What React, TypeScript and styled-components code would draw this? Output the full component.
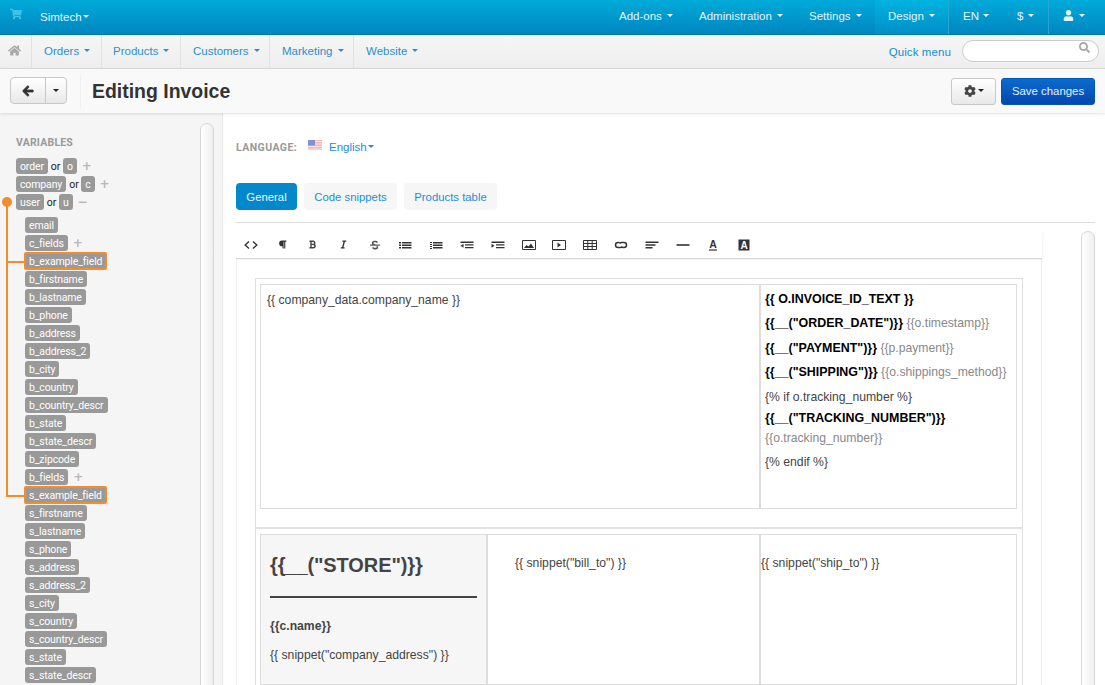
import React from "react";
import styled, { createGlobalStyle } from "styled-components";
import { FaShoppingCart, FaHome, FaArrowLeft, FaCog, FaUser, FaSearch, FaParagraph, FaBold, FaItalic, FaStrikethrough } from "react-icons/fa";

const Global = createGlobalStyle`
  html, body { margin: 0; padding: 0; background: #fff; }
  body { font-family: "Liberation Sans", Arial, sans-serif; font-size: 12px; color: #444; }
  * { box-sizing: border-box; }
`;

const Page = styled.div`
  width: 1105px; height: 685px; overflow: hidden; display: flex; flex-direction: column;
`;
const TopBar = styled.header`
  height: 35px; flex: none; display: flex; align-items: stretch; justify-content: space-between; color: #e6f5fb;
  background: linear-gradient(to bottom, #00abd9, #0086c0); border-bottom: 1px solid #0079ad;
`;
const TopLeft = styled.div`
  display: flex; align-items: center; padding-left: 10px;
  svg { color: #3fc0e6; font-size: 12px; margin-top: -7px; }
`;
const Brand = styled.span`
  margin-left: 18px; font-size: 11.5px; display: flex; align-items: center; color: #e3f3fa;
`;
const Caret = styled.i<{ $c?: string; $gap?: number }>`
  display: inline-block; width: 0; height: 0; margin-left: ${p => p.$gap ?? 5}px; margin-top: -1px;
  border-left: 3px solid transparent; border-right: 3px solid transparent;
  border-top: 3px solid ${p => p.$c ?? "#f0f9fc"};
`;
const TopRight = styled.nav`
  display: flex; align-items: stretch; margin-right: 8px;
`;
const TopItem = styled.a<{ $on?: boolean; $w: number; $sep?: boolean; $pl: number }>`
  width: ${p => p.$w}px; padding-left: ${p => p.$pl}px; display: flex; align-items: center; font-size: 11.5px; color: #e3f3fa;
  padding-bottom: 3px;
  background: ${p => (p.$on ? "linear-gradient(to bottom, #00b3e0, #008fc8)" : "none")};
  border-right: ${p => (p.$sep ? "1px solid #29a5d5" : "0")};
`;
const SubBar = styled.div`
  height: 34px; flex: none; display: flex; align-items: stretch; justify-content: space-between;
  background: linear-gradient(to bottom, #f6f6f6, #eeeeee); border-bottom: 1px solid #dadada;
`;
const SubNav = styled.nav`display: flex; align-items: stretch;`;
const HomeCell = styled.a`
  width: 32px; display: flex; align-items: center; padding-left: 8px; color: #a8a8a8; font-size: 13px; border-right: 1px solid #e2e2e2;
  padding-bottom: 3px;
`;
const SubItem = styled.a<{ $w: number; $pl?: number; $last?: boolean }>`
  width: ${p => p.$w}px; display: flex; align-items: center; padding: 0 0 2px ${p => p.$pl ?? 12}px; font-size: 11.5px; color: #2a8fd0;
  border-right: ${p => (p.$last ? "0" : "1px solid #e2e2e2")};
`;
const QuickArea = styled.div`display: flex; align-items: center; padding-right: 6px; padding-bottom: 1px;`;
const Quick = styled.a`font-size: 11.5px; color: #0c8fd8; margin-right: 11px; letter-spacing: .1px; padding-top: 1px;`;
const SearchBox = styled.div`
  width: 137px; height: 22px; background: #fff; border: 1px solid #ccc; border-radius: 11px; display: flex; justify-content: flex-end; padding: 1px 8px 0 0;
  color: #a5a5a5; font-size: 11px;
`;
const ActionBar = styled.div`
  height: 44px; flex: none; display: flex; align-items: center; justify-content: space-between; padding: 0 10px;
  background: #f9f9f9; box-shadow: 0 1px 3px rgba(0,0,0,.12); position: relative; z-index: 2;
`;
const ActionLeft = styled.div`display: flex; align-items: center;`;
const BtnGroup = styled.div`
  width: 57px; height: 27px; display: flex; margin-top: -1px; border: 1px solid #c8c8c8; border-radius: 4px;
  background: linear-gradient(to bottom, #fff, #e8e8e8); color: #333;
`;
const BackBtn = styled.span`
  width: 35px; display: flex; align-items: center; justify-content: center; border-right: 1px solid #c8c8c8; font-size: 12px;
  svg { stroke: currentColor; stroke-width: 40; }
`;
const DropBtn = styled.span`flex: 1; display: flex; align-items: center; justify-content: center;`;
const VSep = styled.div`width: 1px; height: 33px; background: #f0f0f0; margin: 0 11px 0 13px;`;
const Title = styled.h1`margin: 0; font-size: 19.45px; line-height: 24px; font-weight: 700; color: #333;`;
const ActionRight = styled.div`display: flex; gap: 5px;`;
const GearBtn = styled.span`
  width: 45px; height: 27px; display: flex; align-items: center; justify-content: center; border: 1px solid #c8c8c8; border-radius: 3px;
  background: linear-gradient(to bottom, #fff, #e8e8e8); color: #444; font-size: 12px;
`;
const SaveBtn = styled.span`
  width: 94px; height: 27px; display: flex; align-items: center; justify-content: center; border-radius: 3px; color: #e8f0fa; font-size: 11.4px;
  background: linear-gradient(to bottom, #0a6ccf, #0346ae); border: 1px solid #0555b5;
`;
const Body = styled.div`flex: 1; min-height: 0; display: flex;`;
const Sidebar = styled.aside`
  width: 223px; flex: none; background: #f5f5f5; border-right: 1px solid #e8e8e8; position: relative; padding: 23px 0 0 16px; overflow: hidden;
`;
const SideScroll = styled.div`
  position: absolute; left: 200px; top: 10px; bottom: -10px; width: 14px; border: 1px solid #d6d6d6; border-radius: 7px 7px 0 0;
  background: linear-gradient(to right, #fff, #efefef);
`;
const SideTitle = styled.div`
  font-family: Roboto, sans-serif; font-weight: 700; font-size: 10.5px; color: #9a9a9a; line-height: 13px; letter-spacing: .2px; margin-bottom: 8px;
`;
const VarRow = styled.div<{ $nested?: boolean }>`
  height: 18px; display: flex; align-items: center; font-size: 11.5px; color: #222; margin-left: ${p => (p.$nested ? 9 : 0)}px;
`;
const Tag = styled.span`
  height: 16px; display: inline-flex; align-items: center; padding: 0 4px; border-radius: 3px; background: #999; color: #fff;
  font-family: Roboto, sans-serif; font-size: 10.5px; letter-spacing: -.13px;
`;
const HiTag = styled(Tag)`
  height: 18px; margin-left: -1px; border: 2px solid #f68b2c; border-radius: 2px; padding: 0 3px;
`;
const Or = styled.span`margin: 0 2.5px 0 3px; font-family: Roboto, sans-serif; font-size: 10.5px; color: #222;`;
const Sign = styled.span`margin-left: 5px; color: #b8b8b8; font-family: "DejaVu Sans", sans-serif; font-size: 12px; font-weight: 700; line-height: 14px;`;
const Nested = styled.div`margin-top: 5px;`;
const Dot = styled.span`position: absolute; left: 2px; top: 84px; width: 10px; height: 10px; border-radius: 50%; background: #f68b2c;`;
const Trunk = styled.span`position: absolute; left: 6px; top: 85px; width: 2px; height: 299px; background: #f68b2c;`;
const Branch = styled.span<{ $top: number }>`position: absolute; left: 6px; top: ${p => p.$top}px; width: 19px; height: 2px; background: #f68b2c;`;
const Main = styled.main`flex: 1; min-width: 0; padding: 22px 10px 0 13px; position: relative; overflow: hidden;`;
const MainScroll = styled.div`
  position: absolute; left: 858px; top: 118px; bottom: -10px; width: 14px; border: 1px solid #d6d6d6; border-radius: 7px 7px 0 0;
  background: linear-gradient(to right, #fff, #efefef);
`;
const LangRow = styled.div`display: flex; align-items: center; height: 24px;`;
const LangLabel = styled.span`
  font-family: Roboto, sans-serif; font-weight: 700; font-size: 10.5px; letter-spacing: .45px; color: #999; width: 72px;
`;
const Flag = styled.svg`width: 14px; height: 10px; margin-top: -4px; margin-right: 7px;`;
const LangLink = styled.a`font-size: 11.5px; color: #1c8ed6; display: flex; align-items: center;`;
const Tabs = styled.div`display: flex; gap: 7px; margin-top: 24px; padding-bottom: 12px; border-bottom: 1px solid #ddd;`;
const TabBtn = styled.span<{ $on?: boolean; $w: number }>`
  width: ${p => p.$w}px; height: 27px; display: flex; align-items: center; justify-content: center; border-radius: 4px; font-size: 11.35px;
  background: ${p => (p.$on ? "#0388cc" : "#f6f6f6")}; color: ${p => (p.$on ? "#eef7fc" : "#1c8ed6")};
`;
const Toolbar = styled.div`
  width: 806px; height: 27px; margin-top: 9px; display: flex; align-items: center; background: #fff; padding-bottom: 1px;
  border-bottom: 1px solid #d6d6d6; box-shadow: 1px 1px 2px rgba(0,0,0,.06); position: relative;
`;
const ToolIcon = styled.span`
  width: 30.8px; height: 14px; flex: none; display: flex; justify-content: center; align-items: center; color: #333; font-size: 10px;
  svg { display: block; }
`;
const Editor = styled.div`
  width: 806px; border-left: 1px solid #eee; border-right: 1px solid #eee; padding: 19px 18px 0 18px;
`;
const OuterTable = styled.div`border: 1px solid #e0e0e0; padding: 5px 5px 0 4px; width: 768px;`;
const Row = styled.div<{ $h: number }>`display: flex; height: ${p => p.$h}px;`;
const Cell = styled.div<{ $w: number; $grey?: boolean; $pl?: number; $pt?: number }>`
  width: ${p => p.$w}px; flex: none; border: 1px solid #ddd;
  background: ${p => (p.$grey ? "#f6f6f6" : "#fff")}; padding: ${p => p.$pt ?? 8}px 0 0 ${p => p.$pl ?? 6}px;
`;
const RowSep = styled.div`height: 2px; background: #e2e2e2; margin: 18px -5px 5px -4px;`;
const Tmpl = styled.div`font-size: 12.2px; line-height: 14px; color: #444; white-space: nowrap;`;
const Line = styled.div<{ $h: number }>`height: ${p => p.$h}px; font-size: 12.2px; line-height: 14px; white-space: nowrap; color: #444;`;
const Strong = styled.b`color: #000; font-weight: 700; font-size: 12.45px;`;
const Mute = styled.span`color: #888;`;
const Store = styled.div`font-size: 20px; line-height: 26px; font-weight: 700; color: #444; margin-top: 8px; letter-spacing: -.1px;`;
const Rule = styled.div`width: 207px; height: 2px; background: #444; margin-top: 18px;`;
const CName = styled.div`font-weight: 700; font-size: 12.2px; line-height: 14px; color: #444; margin-top: 21px;`;
const Addr = styled(Tmpl)`margin-top: 15px;`;

const S = (p: { w?: number; h?: number; children: React.ReactNode }) => (
  <svg width={p.w ?? 14} height={p.h ?? 12} viewBox={`0 0 ${p.w ?? 14} ${p.h ?? 12}`} fill="#333">{p.children}</svg>
);

const tools: React.ReactNode[] = [
  <S><path d="M5 2.5 1.2 6 5 9.5M9 2.5 12.8 6 9 9.5" fill="none" stroke="#333" strokeWidth="1.4" /></S>,
  <FaParagraph size={9} />,
  <FaBold size={9} style={{ color: "#444" }} />,
  <FaItalic size={9} />,
  <FaStrikethrough size={10} style={{ color: "#555" }} />,
  <S><path d="M1 3h2v1.5H1zM1 5.5h2v1.5H1zM1 8h2v1.5H1zM4 3h9.5v1.5H4zM4 5.5h9.5v1.5H4zM4 8h9.5v1.5H4z" /></S>,
  <S><path d="M1 3h2v1H1zM1 5h2v1H1zM1 7h2v1H1zM1 9h2v1H1zM4 3h9.5v1.5H4zM4 5.5h9.5v1.5H4zM4 8h9.5v1.5H4z" /></S>,
  <S><path d="M.5 2.5h13v1.4H.5zM5 5.2h8.5v1.4H5zM5 7.9h8.5v1.4H5zM.5 6.8l3-2v4z" /></S>,
  <S><path d="M.5 2.5h13v1.4H.5zM5 5.2h8.5v1.4H5zM5 7.9h8.5v1.4H5zM3.5 6.8l-3-2v4z" /></S>,
  <S><path d="M.5 1.5h13v9H.5z" fill="#fff" stroke="#333" /><path d="M2 9l2.5-3 2 1.5L9 4.5 12 9z" /></S>,
  <S><path d="M.5 1.5h13v9H.5z" fill="#fff" stroke="#333" /><path d="M5.5 3.5 9 6l-3.5 2.5z" /></S>,
  <S><path d="M.5 1.5h13v9H.5z" fill="none" stroke="#333" /><path d="M.5 4.5h13M.5 7.5h13M4.8 1.5v9M9.2 1.5v9" stroke="#333" /></S>,
  <S><path d="M5.5 3.5H4a2.5 2.5 0 0 0 0 5h2.5a2.5 2.5 0 0 0 2-1M8.5 8.5H10a2.5 2.5 0 0 0 0-5H7.5a2.5 2.5 0 0 0-2 1" fill="none" stroke="#333" strokeWidth="1.5" /></S>,
  <S><path d="M.5 2.5h13v1.5H.5zM.5 5.3h10v1.5H.5zM.5 8.1h7v1.5H.5z" /></S>,
  <S><path d="M.5 5.2h13v1.6H.5z" /></S>,
  <S w={10}><path d="M1 10.4h8v1.2H1z" /><text x="5" y="9.2" fontSize="10.5" fontWeight="700" textAnchor="middle" fontFamily="Liberation Sans">A</text></S>,
  <S w={12}><path d="M.5 .5h11v11H.5z" /><text x="6" y="9.6" fontSize="10" fontWeight="700" textAnchor="middle" fill="#fff" fontFamily="Liberation Sans">A</text></S>,
];

const nested: { n: string; hi?: boolean; plus?: boolean }[] = [
  { n: "email" }, { n: "c_fields", plus: true }, { n: "b_example_field", hi: true }, { n: "b_firstname" }, { n: "b_lastname" },
  { n: "b_phone" }, { n: "b_address" }, { n: "b_address_2" }, { n: "b_city" }, { n: "b_country" }, { n: "b_country_descr" },
  { n: "b_state" }, { n: "b_state_descr" }, { n: "b_zipcode" }, { n: "b_fields", plus: true }, { n: "s_example_field", hi: true },
  { n: "s_firstname" }, { n: "s_lastname" }, { n: "s_phone" }, { n: "s_address" }, { n: "s_address_2" }, { n: "s_city" },
  { n: "s_country" }, { n: "s_country_descr" }, { n: "s_state" }, { n: "s_state_descr" },
];

export default function App() {
  return (
    <Page>
      <Global />
      <TopBar>
        <TopLeft>
          <FaShoppingCart />
          <Brand>Simtech<Caret $gap={1} /></Brand>
        </TopLeft>
        <TopRight>
          <TopItem $w={80} $pl={13}>Add-ons<Caret /></TopItem>
          <TopItem $w={110} $pl={13}>Administration<Caret /></TopItem>
          <TopItem $w={79} $pl={13}>Settings<Caret /></TopItem>
          <TopItem $w={74} $pl={13} $on $sep>Design<Caret /></TopItem>
          <TopItem $w={53} $pl={14}>EN<Caret $gap={4} /></TopItem>
          <TopItem $w={47} $pl={15} $sep>$<Caret $gap={5} /></TopItem>
          <TopItem $w={48} $pl={14}><FaUser size={11} /><Caret $gap={5} /></TopItem>
        </TopRight>
      </TopBar>
      <SubBar>
        <SubNav>
          <HomeCell><FaHome /></HomeCell>
          <SubItem $w={70}>Orders<Caret $c="#2a8fd0" /></SubItem>
          <SubItem $w={79} $pl={11}>Products<Caret $c="#2a8fd0" /></SubItem>
          <SubItem $w={89}>Customers<Caret $c="#2a8fd0" /></SubItem>
          <SubItem $w={84}>Marketing<Caret $c="#2a8fd0" /></SubItem>
          <SubItem $w={70} $last>Website<Caret $c="#2a8fd0" /></SubItem>
        </SubNav>
        <QuickArea>
          <Quick>Quick menu</Quick>
          <SearchBox><FaSearch /></SearchBox>
        </QuickArea>
      </SubBar>
      <ActionBar>
        <ActionLeft>
          <BtnGroup>
            <BackBtn><FaArrowLeft /></BackBtn>
            <DropBtn><Caret $c="#222" $gap={0} /></DropBtn>
          </BtnGroup>
          <VSep />
          <Title>Editing Invoice</Title>
        </ActionLeft>
        <ActionRight>
          <GearBtn><FaCog /><Caret $c="#222" $gap={2} /></GearBtn>
          <SaveBtn>Save changes</SaveBtn>
        </ActionRight>
      </ActionBar>
      <Body>
        <Sidebar>
          <SideScroll />
          <Dot /><Trunk /><Branch $top={148} /><Branch $top={382} />
          <SideTitle>VARIABLES</SideTitle>
          <VarRow><Tag>order</Tag><Or>or</Or><Tag>o</Tag><Sign>+</Sign></VarRow>
          <VarRow><Tag>company</Tag><Or>or</Or><Tag>c</Tag><Sign>+</Sign></VarRow>
          <VarRow><Tag>user</Tag><Or>or</Or><Tag>u</Tag><Sign>−</Sign></VarRow>
          <Nested>
            {nested.map(t => (
              <VarRow $nested key={t.n}>
                {t.hi ? <HiTag>{t.n}</HiTag> : <Tag>{t.n}</Tag>}
                {t.plus && <Sign>+</Sign>}
              </VarRow>
            ))}
          </Nested>
        </Sidebar>
        <Main>
          <MainScroll />
          <LangRow>
            <LangLabel>LANGUAGE:</LangLabel>
            <Flag viewBox="0 0 14 10">
              <rect width="14" height="10" fill="#f3b5b5" />
              <path d="M0 1.5h14M0 4h14M0 6.5h14M0 9h14" stroke="#fbe7e7" strokeWidth="1" />
              <rect width="7" height="5.5" fill="#7d93d8" />
            </Flag>
            <LangLink>English<Caret $c="#1c8ed6" $gap={1} /></LangLink>
          </LangRow>
          <Tabs>
            <TabBtn $on $w={61}>General</TabBtn>
            <TabBtn $w={93}>Code snippets</TabBtn>
            <TabBtn $w={93}>Products table</TabBtn>
          </Tabs>
          <Toolbar>
            {tools.map((t, i) => <ToolIcon key={i}>{t}</ToolIcon>)}
          </Toolbar>
          <Editor>
            <OuterTable>
              <Row $h={225}>
                <Cell $w={500} $pt={8}><Tmpl>{"{{ company_data.company_name }}"}</Tmpl></Cell>
                <Cell $w={257} $pl={4} $pt={7}>
                  <Line $h={24}><Strong>{"{{ O.INVOICE_ID_TEXT }}"}</Strong></Line>
                  <Line $h={25}><Strong>{'{{__("ORDER_DATE")}}'}</Strong> <Mute>{"{{o.timestamp}}"}</Mute></Line>
                  <Line $h={24}><Strong>{'{{__("PAYMENT")}}'}</Strong> <Mute>{"{{p.payment}}"}</Mute></Line>
                  <Line $h={25}><Strong>{'{{__("SHIPPING")}}'}</Strong> <Mute>{"{{o.shippings_method}}"}</Mute></Line>
                  <Line $h={21}>{"{% if o.tracking_number %}"}</Line>
                  <Line $h={20}><Strong>{'{{__("TRACKING_NUMBER")}}'}</Strong></Line>
                  <Line $h={24}><Mute>{"{{o.tracking_number}}"}</Mute></Line>
                  <Line $h={14}>{"{% endif %}"}</Line>
                </Cell>
              </Row>
              <RowSep />
              <Row $h={151}>
                <Cell $w={227} $grey $pl={9} $pt={9}>
                  <Store>{'{{__("STORE")}}'}</Store>
                  <Rule />
                  <CName>{"{{c.name}}"}</CName>
                  <Addr>{'{{ snippet("company_address") }}'}</Addr>
                </Cell>
                <Cell $w={273} $pl={27} $pt={21}><Tmpl>{'{{ snippet("bill_to") }}'}</Tmpl></Cell>
                <Cell $w={257} $pl={0} $pt={21}><Tmpl>{'{{ snippet("ship_to") }}'}</Tmpl></Cell>
              </Row>
            </OuterTable>
          </Editor>
        </Main>
      </Body>
    </Page>
  );
}
